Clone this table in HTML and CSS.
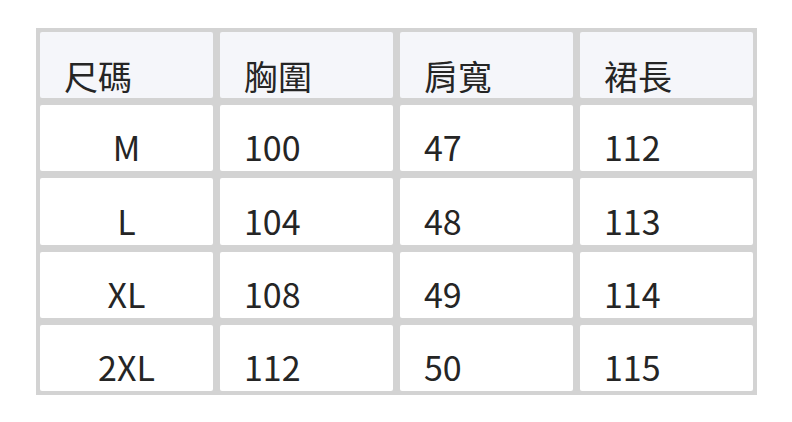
FILE: index.html
```html
<!DOCTYPE html>
<html lang="zh-Hant">
<head>
<meta charset="utf-8">
<link rel="stylesheet" href="styles.css">
</head>
<body>
<div class="page">
  <div class="table">
    <div class="cell head first">尺碼</div>
    <div class="cell head">胸圍</div>
    <div class="cell head">肩寬</div>
    <div class="cell head">裙長</div>

    <div class="cell first">M</div>
    <div class="cell">100</div>
    <div class="cell">47</div>
    <div class="cell">112</div>

    <div class="cell first">L</div>
    <div class="cell">104</div>
    <div class="cell">48</div>
    <div class="cell">113</div>

    <div class="cell first">XL</div>
    <div class="cell">108</div>
    <div class="cell">49</div>
    <div class="cell">114</div>

    <div class="cell first">2XL</div>
    <div class="cell">112</div>
    <div class="cell">50</div>
    <div class="cell">115</div>
  </div>
</div>
</body>
</html>
```

FILE: styles.css
```css
html, body {
  margin: 0;
  padding: 0;
  background: #ffffff;
}
.page {
  width: 792px;
  height: 422px;
  padding: 28px 0 0 36px;
  box-sizing: border-box;
}
.table {
  display: grid;
  grid-template-columns: repeat(4, 173px);
  grid-template-rows: repeat(5, 66.2px);
  gap: 7px;
  padding: 4px;
  width: max-content;
  background: #d3d3d3;
  font-family: "Noto Sans CJK TC", "Noto Sans CJK SC", sans-serif;
  font-size: 34px;
  line-height: 34px;
  color: #252525;
}
.cell {
  background: #ffffff;
  border-radius: 2px;
  display: flex;
  align-items: flex-end;
  padding: 0 0 7px 24px;
  box-sizing: border-box;
}
.cell.head {
  background: #f5f6fa;
  padding-bottom: 5px;
}
.cell.first {
  justify-content: center;
  padding-left: 0;
}
.cell.head.first {
  justify-content: flex-start;
  padding-left: 24px;
}
```
